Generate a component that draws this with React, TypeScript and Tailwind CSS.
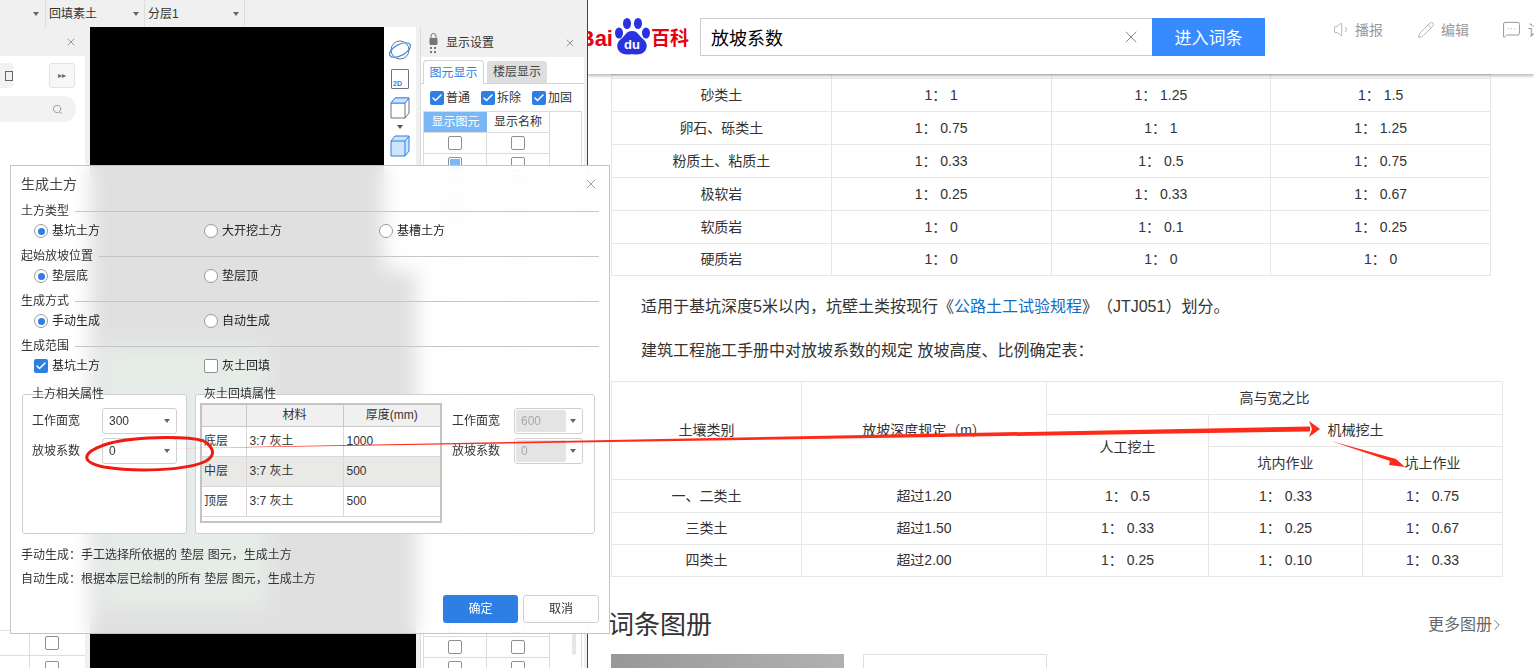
import React from "react";
import { Check, Search, X, Volume1, Pencil, MessageSquareMore, ChevronRight } from "lucide-react";

const Caret = ({ c = "border-t-[#666]" }: { c?: string }) => (
  <span className={`inline-block w-0 h-0 border-l-[3px] border-r-[3px] border-t-[4px] border-l-transparent border-r-transparent ${c}`} />
);

const Box = ({ on }: { on?: boolean }) => (
  <span className="inline-flex items-center justify-center w-[14px] h-[14px] rounded-[2px] border border-[#8f8f8f] bg-white">
    {on && <span className="w-[10px] h-[10px] bg-[#7ab8f5]" />}
  </span>
);

const BlueCheck = () => (
  <span className="inline-flex items-center justify-center w-[14px] h-[14px] rounded-[2px] bg-[#2d7fe3]">
    <Check size={12} strokeWidth={3} color="#fff" />
  </span>
);

const Tool = ({ text, w, arrow }: { text: string; w: string; arrow: string }) => (
  <div className={`${w} h-full flex items-center justify-between border-r border-[#dcdcdc] pl-[3px] ${arrow}`}>
    <span className="truncate">{text}</span>
    <Caret />
  </div>
);

const LeftPanel = () => (
  <div className="w-[85px] shrink-0 bg-white flex flex-col overflow-hidden">
    <div className="h-[29px] shrink-0 bg-[#f0f0f0] flex items-center justify-end pr-[8px]">
      <X size={12} color="#999" />
    </div>
    <div className="h-[25px] mt-[7px] shrink-0 flex items-center justify-between">
      <div className="w-[13px] h-[25px] bg-[#f2f2f2] rounded-r-[3px] flex items-center justify-end">
        <span className="w-[8px] h-[10px] border border-[#666]" />
      </div>
      <div className="w-[26px] h-[25px] mr-[10px] rounded-[3px] border border-[#e2e2e2] bg-[#f7f7f7] flex items-center justify-center text-[8px] text-[#666] leading-none">
        ▸▸
      </div>
    </div>
    <div className="w-[76px] h-[26px] mt-[8px] shrink-0 rounded-r-[13px] bg-[#f2f2f2] flex items-center justify-end pr-[13px]">
      <Search size={11} color="#9a9a9a" />
    </div>
    <div className="flex-1 flex flex-col justify-end -mb-[12px]">
      {[0, 1].map((i) => (
        <div key={i} className="h-[25px] flex items-center border-t border-[#dedede]">
          <div className="w-[30px] h-full border-r border-[#dedede]" />
          <div className="ml-[15px] flex">
            <Box />
          </div>
        </div>
      ))}
    </div>
  </div>
);

const Orbit = () => (
  <svg width="24" height="22" viewBox="0 0 24 22" fill="none">
    <ellipse cx="12" cy="11" rx="9" ry="9" stroke="#6b7280" strokeWidth="1" />
    <ellipse cx="12" cy="11" rx="11.5" ry="5.5" transform="rotate(-28 12 11)" stroke="#3f8cf0" strokeWidth="1.2" />
  </svg>
);

const Strip = () => (
  <div className="w-[32px] h-[243px] bg-white flex flex-col items-center pt-[12px]">
    <Orbit />
    <div className="mt-[8px] w-[18px] h-[20px] border border-[#6b7280] rounded-[1px] flex items-end justify-start pl-[1px] text-[7px] font-bold text-[#2d7fe3] leading-[9px]">
      2D
    </div>
    <svg className="mt-[8px]" width="20" height="22" viewBox="0 0 20 22" fill="none">
      <path d="M5 1h14v15l-4 5H1V6z" fill="#fff" stroke="#6b7280" />
      <path d="M1 6h14v15M15 6l4-5" stroke="#6b7280" />
      <path d="M5 1h14l-4 5H1z" fill="#cfe3fb" stroke="#3f8cf0" />
    </svg>
    <span className="mt-[6px] flex">
      <Caret c="border-t-[#555]" />
    </span>
    <svg className="mt-[6px]" width="20" height="22" viewBox="0 0 20 22" fill="none">
      <path d="M5 1h14v15l-4 5H1V6z" fill="#cfe3fb" stroke="#2d7fe3" />
      <path d="M1 6h14v15M15 6l4-5" stroke="#2d7fe3" />
    </svg>
  </div>
);

const rightRows = [false, true, false, true, ...Array(22).fill(false)] as boolean[];

const DisplayPanel = () => (
  <div className="ml-[4px] w-[164px] shrink-0 bg-white border-l border-[#dcdcdc] flex flex-col overflow-hidden">
    <div className="h-[30px] shrink-0 bg-[#f0f0f0] flex items-center pl-[7px] pr-[8px] pt-[2px]">
      <div className="flex flex-col items-center w-[10px]">
        <svg width="9" height="12" viewBox="0 0 9 12">
          <rect x="0.5" y="5" width="8" height="7" rx="1" fill="#777" />
          <path d="M2 5V3a2.5 2.5 0 015 0v2" fill="none" stroke="#777" />
        </svg>
        <div className="grid grid-cols-2 gap-[2px] mt-[2px]">
          {[0, 1, 2, 3].map((i) => (
            <span key={i} className="w-[2px] h-[2px] bg-[#777]" />
          ))}
        </div>
      </div>
      <span className="ml-[8px] flex-1">显示设置</span>
      <X size={12} color="#999" />
    </div>
    <div className="h-[25px] mt-[2px] shrink-0 flex items-end pl-[2px] border-b border-[#d4d4d4]">
      <div className="w-[61px] h-[24px] -mb-px bg-white border border-b-0 border-[#d4d4d4] rounded-t-[4px] text-[#2d7fe3] flex items-center justify-center">图元显示</div>
      <div className="ml-[3px] w-[60px] h-[22px] bg-[#dedede] rounded-t-[3px] flex items-center justify-center text-[#444]">楼层显示</div>
    </div>
    <div className="h-[27px] shrink-0 flex items-center pl-[9px]">
      {["普通", "拆除", "加固"].map((t, i) => (
        <div key={t} className={`flex items-center gap-[2px] ${i < 2 ? "w-[51px]" : ""}`}>
          <BlueCheck />
          <span className="w-[27px] overflow-hidden whitespace-nowrap">{t}</span>
        </div>
      ))}
    </div>
    <div className="mx-[2px] flex-1 flex border-t border-l border-r border-[#dcdcdc] overflow-hidden">
      <div className="w-[126px] shrink-0 flex flex-col">
        <div className="h-[21px] shrink-0 flex border-b border-[#dcdcdc]">
          <div className="w-[63px] bg-[#7ab8f5] text-white flex items-center justify-center">显示图元</div>
          <div className="w-[63px] border-r border-[#dcdcdc] flex items-center justify-center">显示名称</div>
        </div>
        {rightRows.map((on, i) => (
          <div key={i} className="h-[21px] shrink-0 flex border-b border-[#dcdcdc]">
            <div className="w-[63px] border-r border-[#dcdcdc] flex items-center justify-center"><Box on={on} /></div>
            <div className="w-[63px] border-r border-[#dcdcdc] flex items-center justify-center"><Box /></div>
          </div>
        ))}
      </div>
      <div className="flex-1 flex justify-end pr-[5px] items-end">
        <div className="w-[4px] h-[200px] rounded-[2px] bg-[#e6e6e6] mb-[13px]" />
      </div>
    </div>
  </div>
);

const Radio = ({ on, label, w }: { on?: boolean; label: string; w: string }) => (
  <div className={`${w} flex items-center gap-[4px]`}>
    <span className="w-[14px] h-[14px] rounded-full border border-[#9a9a9a] bg-white flex items-center justify-center">
      {on && <span className="w-[7px] h-[7px] rounded-full bg-[#2d7fe3]" />}
    </span>
    <span className="text-[#222]">{label}</span>
  </div>
);

const Section = ({ title, children }: { title: string; children: React.ReactNode }) => (
  <div className="h-[45px]">
    <div className="h-[20px] flex items-center gap-[6px] text-[#333]">
      <span>{title}</span>
      <span className="flex-1 h-px bg-[#c6c6c6]" />
    </div>
    <div className="h-[20px] pl-[13px] flex items-center">{children}</div>
  </div>
);

const Select = ({ value, w, off }: { value: string; w: string; off?: boolean }) => (
  <div className={`${w} h-[26px] rounded-[3px] border border-[#cfcfcf] bg-white flex items-center justify-between pr-[6px] ${off ? "pl-[1px]" : "pl-[6px]"}`}>
    <span className={off ? "h-[22px] w-[50px] bg-[#e4e4e4] rounded-[2px] flex items-center pl-[5px] text-[#a8a8a8]" : "text-[#333]"}>{value}</span>
    <Caret />
  </div>
);

const layers = [
  ["底层", "3:7 灰土", "1000", "bg-white"],
  ["中层", "3:7 灰土", "500", "bg-[#e9e9e6]"],
  ["顶层", "3:7 灰土", "500", "bg-white"],
];

const Dialog = () => (
  <div className="absolute left-[10px] top-[165px] z-20 w-[600px] h-[469px] border border-[#c4c4c4] bg-white/[0.88] backdrop-blur-[10px] px-[10px] text-[12px] leading-[16px] text-[#333] font-['Liberation_Sans','Noto_Sans_CJK_SC',sans-serif]">
    <div className="h-[35px] flex items-center justify-between text-[14px] text-[#444]">
      <span>生成土方</span>
      <X size={16} strokeWidth={1.2} color="#888" />
    </div>
    <Section title="土方类型">
      <Radio on label="基坑土方" w="w-[170px]" />
      <Radio label="大开挖土方" w="w-[175px]" />
      <Radio label="基槽土方" w="w-[150px]" />
    </Section>
    <Section title="起始放坡位置">
      <Radio on label="垫层底" w="w-[170px]" />
      <Radio label="垫层顶" w="w-[175px]" />
    </Section>
    <Section title="生成方式">
      <Radio on label="手动生成" w="w-[170px]" />
      <Radio label="自动生成" w="w-[175px]" />
    </Section>
    <Section title="生成范围">
      <div className="w-[170px] flex items-center gap-[4px]"><BlueCheck /><span className="text-[#222]">基坑土方</span></div>
      <div className="flex items-center gap-[4px]">
        <span className="w-[14px] h-[14px] rounded-[2px] border border-[#8f8f8f] bg-white" />
        <span className="text-[#222]">灰土回填</span>
      </div>
    </Section>
    <div className="mt-[13px] flex gap-[8px] pl-px">
      <div className="w-[165px] h-[140px] rounded-[3px] border border-[#cfcfcf] bg-white pl-[9px]">
        <div className="-mt-[9px] h-[16px] text-[#333]">土方相关属性</div>
        <div className="mt-[6px] flex items-center"><span className="w-[70px]">工作面宽</span><Select value="300" w="w-[75px]" /></div>
        <div className="mt-[4px] flex items-center"><span className="w-[70px]">放坡系数</span><Select value="0" w="w-[75px]" /></div>
      </div>
      <div className="w-[400px] h-[140px] rounded-[3px] border border-[#cfcfcf] bg-white pl-[4px]">
        <div className="-mt-[9px] ml-[4px] h-[16px] text-[#333]">灰土回填属性</div>
        <div className="mt-px flex">
          <div className="w-[242px] h-[120px] border-2 border-[#c4c4c4] bg-white overflow-hidden">
            <table className="w-full table-fixed border-collapse">
              <thead>
                <tr className="h-[21px] bg-[#f0f0f0] border-b border-[#c8c8c8]">
                  <th className="w-[44px] font-normal border-r border-[#c8c8c8]" />
                  <th className="w-[97px] font-normal border-r border-[#c8c8c8]">材料</th>
                  <th className="font-normal">厚度(mm)</th>
                </tr>
              </thead>
              <tbody>
                {layers.map((r) => (
                  <tr key={r[0]} className={`h-[30px] border-b border-[#d8d8d8] ${r[3]}`}>
                    <td className="pl-[2px] border-r border-[#d8d8d8]">{r[0]}</td>
                    <td className="pl-[3px] border-r border-[#d8d8d8]">{r[1]}</td>
                    <td className="pl-[3px]">{r[2]}</td>
                  </tr>
                ))}
              </tbody>
            </table>
          </div>
          <div className="ml-[10px] pt-[5px]">
            <div className="flex items-center"><span className="w-[62px]">工作面宽</span><Select off value="600" w="w-[69px]" /></div>
            <div className="mt-[4px] flex items-center"><span className="w-[62px]">放坡系数</span><Select off value="0" w="w-[69px]" /></div>
          </div>
        </div>
      </div>
    </div>
    <div className="mt-[12px] h-[18px] flex items-center">手动生成：手工选择所依据的 垫层 图元，生成土方</div>
    <div className="mt-[6px] h-[18px] flex items-center">自动生成：根据本层已绘制的所有 垫层 图元，生成土方</div>
    <div className="mt-[7px] flex justify-end gap-[5px]">
      <div className="w-[75px] h-[28px] rounded-[3px] bg-[#2d7fe3] text-white flex items-center justify-center">确定</div>
      <div className="w-[76px] h-[28px] rounded-[3px] border border-[#cfcfcf] bg-white flex items-center justify-center">取消</div>
    </div>
  </div>
);

const Annotation = () => (
  <svg className="absolute left-0 top-0 z-30 pointer-events-none" width="1534" height="668" viewBox="0 0 1534 668" fill="none">
    <defs>
      <linearGradient id="fade" x1="140" y1="0" x2="260" y2="0" gradientUnits="userSpaceOnUse">
        <stop offset="0" stopColor="#ff2a1a" stopOpacity="0" />
        <stop offset="1" stopColor="#ff2a1a" />
      </linearGradient>
    </defs>
    <path d="M204 441C186 436 130 436 104 445C82 453 80 462 104 467C134 472 186 471 206 461C216 455 214 448 204 441" stroke="#f01a12" strokeWidth="3" />
    <path d="M140 449L1310 426.5L1310 431.5Z" fill="url(#fade)" />
    <path d="M1309 421L1320 429L1309 437L1312 429Z" fill="#ff2a1a" />
    <path d="M1331 441L1396 459L1405 467L1389 465L1390 461Z" fill="#ff2a1a" />
  </svg>
);

const Baike = () => (
  <div className="h-[74px] shrink-0 relative z-10 bg-white shadow-[0_2px_3px_rgba(0,0,0,0.28)] flex items-center overflow-hidden">
    <div className="w-[112px] shrink-0 -ml-[4px] flex items-center font-['Liberation_Sans','Noto_Sans_CJK_SC',sans-serif] font-bold text-[#e60012]">
      <span className="w-[29px] shrink-0 flex justify-end overflow-hidden mt-[3px]">
        <span className="text-[22px] leading-[26px]">Bai</span>
      </span>
      <span className="relative w-[38px] h-[38px] shrink-0 flex items-end justify-center">
        <svg className="absolute left-0 top-0" width="38" height="38" viewBox="0 0 38 38" fill="#2932e1">
          <ellipse cx="6" cy="15" rx="4" ry="5.5" />
          <ellipse cx="14" cy="5.5" rx="4" ry="5.5" />
          <ellipse cx="25" cy="5.5" rx="4" ry="5.5" />
          <ellipse cx="33" cy="15" rx="4" ry="5.5" />
          <path d="M19 13c-6 0-7 5-11 8-4 3-5 8-2 12 3 4 9 4 13 3 4 1 10 1 13-3 3-4 2-9-2-12-4-3-5-8-11-8z" />
        </svg>
        <span className="relative text-[13px] leading-[22px] text-white">du</span>
      </span>
      <span className="text-[19px] whitespace-nowrap mt-[4px]">百科</span>
    </div>
    <div className="ml-[4px] w-[452px] h-[38px] shrink-0 border border-[#ccc] border-r-0 flex items-center justify-between pl-[10px] pr-[11px] text-[18px] text-black font-['Noto_Sans_CJK_SC',sans-serif]">
      <span>放坡系数</span>
      <X size={20} strokeWidth={1.2} color="#888" />
    </div>
    <div className="w-[113px] h-[38px] shrink-0 bg-[#388bff] text-white text-[17px] flex items-center justify-center font-['Noto_Sans_CJK_SC',sans-serif]">进入词条</div>
    <div className="ml-[68px] -mt-[15px] shrink-0 flex items-center text-[14px] text-[#999] font-['Noto_Sans_CJK_SC',sans-serif] whitespace-nowrap">
      <Volume1 size={19} strokeWidth={1.1} color="#aaa" />
      <span className="ml-[3px] w-[29px]">播报</span>
      <Pencil className="ml-[33px]" size={18} strokeWidth={1.1} color="#aaa" />
      <span className="ml-[6px] w-[29px]">编辑</span>
      <MessageSquareMore className="ml-[32px]" size={19} strokeWidth={1.1} color="#888" />
      <span className="ml-[7px]">讨论</span>
    </div>
  </div>
);

const t1: [string, string, string, string, string][] = [
  ["砂类土", "1： 1", "1： 1.25", "1： 1.5", "h-[33px]"],
  ["卵石、砾类土", "1： 0.75", "1： 1", "1： 1.25", "h-[33px]"],
  ["粉质土、粘质土", "1： 0.33", "1： 0.5", "1： 0.75", "h-[33px]"],
  ["极软岩", "1： 0.25", "1： 0.33", "1： 0.67", "h-[33px]"],
  ["软质岩", "1： 0", "1： 0.1", "1： 0.25", "h-[33px]"],
  ["硬质岩", "1： 0", "1： 0", "1： 0", "h-[32px]"],
];

const td = "border border-[#e6e6e6] text-center p-0";

const Table1 = () => (
  <table className="w-[880px] table-fixed border-collapse">
    <tbody>
      <tr className="h-[4px]">
        <td className={td} /><td className={td} /><td className={td} /><td className={td} />
      </tr>
      {t1.map((r) => (
        <tr key={r[0]} className={r[4]}>
          {r.slice(0, 4).map((c, i) => (
            <td key={i} className={td}>{c}</td>
          ))}
        </tr>
      ))}
    </tbody>
  </table>
);

const Table2 = () => (
  <table className="w-[891px] table-fixed border-collapse">
    <colgroup>
      <col className="w-[190px]" /><col className="w-[245px]" /><col className="w-[162px]" /><col className="w-[154px]" /><col className="w-[140px]" />
    </colgroup>
    <tbody>
      <tr className="h-[33px]">
        <td rowSpan={3} className={td}>土壤类别</td>
        <td rowSpan={3} className={td}>放坡深度规定（m）</td>
        <td colSpan={3} className={td}>高与宽之比</td>
      </tr>
      <tr className="h-[32px]">
        <td rowSpan={2} className={td}>人工挖土</td>
        <td colSpan={2} className={td}>机械挖土</td>
      </tr>
      <tr className="h-[33px]">
        <td className={td}>坑内作业</td>
        <td className={td}>坑上作业</td>
      </tr>
      <tr className="h-[33px]">
        {["一、二类土", "超过1.20", "1： 0.5", "1： 0.33", "1： 0.75"].map((c, i) => <td key={i} className={td}>{c}</td>)}
      </tr>
      <tr className="h-[32px]">
        {["三类土", "超过1.50", "1： 0.33", "1： 0.25", "1： 0.67"].map((c, i) => <td key={i} className={td}>{c}</td>)}
      </tr>
      <tr className="h-[32px]">
        {["四类土", "超过2.00", "1： 0.25", "1： 0.10", "1： 0.33"].map((c, i) => <td key={i} className={td}>{c}</td>)}
      </tr>
    </tbody>
  </table>
);

export default function App() {
  return (
    <div className="relative w-[1534px] h-[668px] overflow-hidden bg-white flex text-[#333] font-['Liberation_Sans','Noto_Sans_CJK_SC',sans-serif]">
      <div className="w-[588px] h-full shrink-0 flex flex-col bg-[#f0f0f0] border-r border-[#2f4473] text-[12px] leading-[16px] text-[#333]">
        <div className="h-[27px] shrink-0 flex items-center">
          <Tool text="" w="w-[46px]" arrow="pr-[6px]" />
          <Tool text="回填素土" w="w-[99px]" arrow="pr-[5px]" />
          <Tool text="分层1" w="w-[100px]" arrow="pr-[5px]" />
        </div>
        <div className="flex-1 flex min-h-0">
          <LeftPanel />
          <div className="w-[5px] shrink-0 bg-[#f0f0f0]" />
          <div className="w-[326px] shrink-0 relative bg-black flex justify-end items-start">
            <Strip />
            <div className="absolute left-[10px] top-[318px] w-[170px] h-[265px] bg-[#326442]" />
          </div>
          <DisplayPanel />
        </div>
      </div>
      <div className="w-[946px] h-full shrink-0 flex flex-col overflow-hidden text-[14px] text-[#333]">
        <Baike />
        <div className="pl-[23px] flex-1 min-h-0 overflow-hidden">
          <Table1 />
          <p className="mt-[19px] ml-[30px] h-[24px] text-[16px] leading-[24px] whitespace-nowrap">
            适用于基坑深度5米以内，坑壁土类按现行《<span className="text-[#136ec2]">公路土工试验规程</span>》<span className="ml-[7px]">（JTJ051）划分。</span>
          </p>
          <p className="mt-[20px] ml-[30px] h-[24px] text-[16px] leading-[24px] whitespace-nowrap">建筑工程施工手册中对放坡系数的规定 放坡高度、比例确定表：</p>
          <div className="mt-[18px]">
            <Table2 />
          </div>
          <div className="mt-[32px] w-[891px] h-[32px] flex items-center justify-between">
            <span className="-ml-[3px] text-[26px] text-[#333]">词条图册</span>
            <span className="flex items-center text-[16px] text-[#666] -mr-[4px]">更多图册<ChevronRight size={18} strokeWidth={1.2} className="-ml-[4px]" /></span>
          </div>
          <div className="mt-[13px] flex gap-[19px]">
            <div className="w-[233px] h-[60px] bg-gradient-to-r from-[#96989a] to-[#b0b2b2]" />
            <div className="w-[184px] h-[60px] border border-[#dedede] bg-white" />
          </div>
        </div>
      </div>
      <Dialog />
      <Annotation />
    </div>
  );
}
